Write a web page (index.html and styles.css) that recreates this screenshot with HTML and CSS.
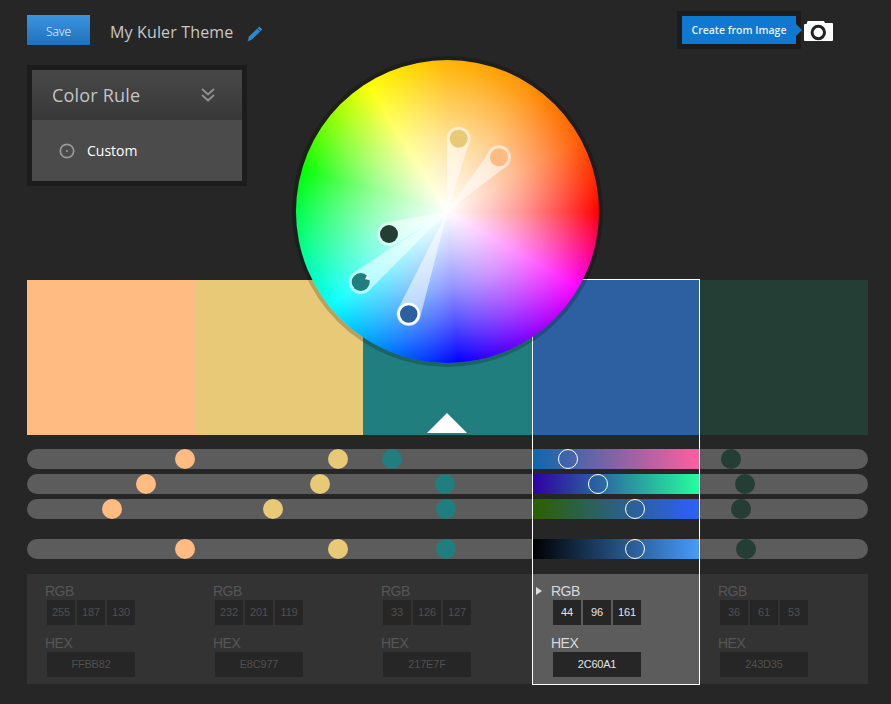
FILE: index.html
```html
<!DOCTYPE html>
<html lang="en">
<head>
<meta charset="utf-8">
<title>My Kuler Theme</title>
<link rel="stylesheet" href="styles.css">
</head>
<body>
<div class="page">
  <section class="top">
    <header class="toolbar">
      <button class="save">Save</button>
      <h1 class="title">My Kuler Theme</h1>
      <svg class="pencil" width="16" height="16" viewBox="0 0 16 16"><path d="M12.2 0.6 L15.4 3.4 L5 13.4 L0.6 15.4 L2 10.6 Z" fill="#2f86c8"/><path d="M10.4 2.6 L13.4 5.4" stroke="#262626" stroke-width=".8"/></svg>
      <div class="create">
        <div class="create-frame"><a class="create-btn">Create from Image</a></div>
        <svg class="camera" width="29" height="21" viewBox="0 0 29 21"><path d="M1 3 H2.6 L3.6 0 H20 L21 2 H28 Q29 2 29 3 V19 Q29 20 28 20 H1 Q0 20 0 19 V4 Q0 3 1 3 Z" fill="#fff"/><circle cx="14.3" cy="11.5" r="6.2" fill="none" stroke="#222" stroke-width="3"/></svg>
      </div>
    </header>
    <aside class="rule">
      <div class="rule-head">
        <span>Color Rule</span>
        <svg width="14" height="14" viewBox="0 0 14 14"><path d="M1 1 L7 6.5 L13 1 M1 7 L7 12.5 L13 7" fill="none" stroke="#8f8f8f" stroke-width="2"/></svg>
      </div>
      <div class="rule-body">
        <svg width="16" height="16" viewBox="0 0 16 16"><circle cx="8" cy="8" r="6.7" fill="none" stroke="#9a9a9a" stroke-width="1.7"/><circle cx="8" cy="8" r="1" fill="#9a9a9a"/></svg>
        <span>Custom</span>
      </div>
    </aside>
  </section>

  <section class="swatches">
    <div class="swatch c1"></div>
    <div class="swatch c2"></div>
    <div class="swatch c3"><span class="marker"></span></div>
    <div class="swatch c4"></div>
    <div class="swatch c5"></div>
  </section>

  <section class="sliders">
    <div class="track">
      <span class="grad g1"></span>
      <i class="dot c1" style="left:148px"></i><i class="dot c2" style="left:301px"></i><i class="dot c3" style="left:355px"></i><i class="dot ring" style="left:531px"></i><i class="dot c5" style="left:694px"></i>
    </div>
    <div class="track">
      <span class="grad g2"></span>
      <i class="dot c1" style="left:109px"></i><i class="dot c2" style="left:283px"></i><i class="dot c3" style="left:408px"></i><i class="dot ring" style="left:561px"></i><i class="dot c5" style="left:708px"></i>
    </div>
    <div class="track">
      <span class="grad g3"></span>
      <i class="dot c1" style="left:75px"></i><i class="dot c2" style="left:236px"></i><i class="dot c3" style="left:409px"></i><i class="dot ring" style="left:598px"></i><i class="dot c5" style="left:704px"></i>
    </div>
    <div class="track track-gap">
      <span class="grad g4"></span>
      <i class="dot c1" style="left:148px"></i><i class="dot c2" style="left:301px"></i><i class="dot c3" style="left:409px"></i><i class="dot ring" style="left:598px"></i><i class="dot c5" style="left:709px"></i>
    </div>
  </section>

  <section class="values">
    <div class="col">
      <div class="label">RGB</div>
      <div class="boxes"><span>255</span><span>187</span><span>130</span></div>
      <div class="label hex">HEX</div>
      <div class="box-wide">FFBB82</div>
    </div>
    <div class="col">
      <div class="label">RGB</div>
      <div class="boxes"><span>232</span><span>201</span><span>119</span></div>
      <div class="label hex">HEX</div>
      <div class="box-wide">E8C977</div>
    </div>
    <div class="col">
      <div class="label">RGB</div>
      <div class="boxes"><span>33</span><span>126</span><span>127</span></div>
      <div class="label hex">HEX</div>
      <div class="box-wide">217E7F</div>
    </div>
    <div class="col active">
      <div class="label">RGB</div>
      <div class="boxes"><span>44</span><span>96</span><span>161</span></div>
      <div class="label hex">HEX</div>
      <div class="box-wide">2C60A1</div>
    </div>
    <div class="col">
      <div class="label">RGB</div>
      <div class="boxes"><span>36</span><span>61</span><span>53</span></div>
      <div class="label hex">HEX</div>
      <div class="box-wide">243D35</div>
    </div>
  </section>

  <div class="selection"></div>

  <div class="wheel">
    <div class="wheel-light"></div>
    <svg class="handles" width="303" height="303" viewBox="0 0 303 303">
      <g class="spoke">
        <path d="M151.5 151.5 L150.7 78.6 L173.4 81.9 Z"/><circle cx="162.7" cy="78.7" r="12"/>
      </g>
      <g class="spoke">
        <path d="M151.5 151.5 L195.1 88.9 L211 105.6 Z"/><circle cx="203" cy="97.3" r="12"/>
      </g>
      <g class="spoke">
        <path d="M151.5 151.5 L89.5 162.8 L97.7 185 Z"/><circle cx="93" cy="174" r="12"/>
      </g>
      <g class="spoke">
        <path d="M151.5 151.5 L57.3 212.7 L72.2 231.4 Z"/><circle cx="64.7" cy="222" r="12"/>
      </g>
      <g class="spoke">
        <path d="M151.5 151.5 L101.5 250 L123.9 258.2 Z"/><circle cx="112.7" cy="254" r="12"/>
      </g>
      <circle cx="162.7" cy="78.7" r="9" fill="#E8C977"/>
      <circle cx="203" cy="97.3" r="9" fill="#FFBB82"/>
      <circle cx="93" cy="174" r="9" fill="#243D35"/>
      <circle cx="64.7" cy="222" r="9" fill="#217E7F"/>
      <path d="M69 219.3 L71 215.3 L74 220 Z" fill="#fff"/>
      <circle cx="112.7" cy="254" r="10" fill="#2C60A1" stroke="#fff" stroke-width="2.5"/>
    </svg>
  </div>
</div>
</body>
</html>
```

FILE: styles.css
```css
* { box-sizing: border-box; }
html, body { margin: 0; height: 100%; }
body { background: #262626; overflow: hidden; font-family: "Open Sans", sans-serif; }
.page { position: relative; width: 891px; height: 704px; padding: 0 23px 0 27px; }

.top { height: 280px; padding-top: 15px; }
.toolbar { display: flex; align-items: center; height: 30px; }
.save {
  width: 63px; height: 30px; padding: 2px 0 0; border: 0;
  background: linear-gradient(#3b95e0, #1f70bc);
  color: #fff; font: 300 12px "Open Sans", sans-serif;
}
.title { margin: 0 14px 0 20px; padding-top: 4px; font-size: 16px; font-weight: 400; letter-spacing: .15px; color: #c8c8c8; width: 123px; white-space: nowrap; }
.pencil { margin-top: 7px; }
.create { display: flex; align-items: center; margin-left: auto; margin-right: 35px; }
.create-frame { position: relative; padding: 5px; background: #1c1c1c; }
.create-btn {
  position: relative; display: block; width: 114px; height: 28px; line-height: 28px; text-align: center;
  background: #0f78cf; color: #e4f1fb; font-size: 10.5px; font-weight: 600; white-space: nowrap;
}
.create-btn::after {
  content: ""; position: absolute; left: 100%; top: 8px;
  border: 6px solid transparent; border-left-color: #0f78cf; border-right-width: 0;
}
.camera { margin-left: 3px; margin-top: 2px; }

.rule { width: 220px; margin-top: 20px; border: 5px solid #1c1c1c; }
.rule-head {
  display: flex; align-items: center; justify-content: space-between;
  height: 50px; padding: 0 27px 0 20px;
  background: linear-gradient(#484848, #383838); color: #c4c4c4; font-size: 18px; letter-spacing: .2px;
}
.rule-body {
  display: flex; align-items: center; gap: 12px; height: 61px; padding-left: 27px;
  background: #4b4b4b; color: #fff; font-size: 14px; font-weight: 500;
}

.swatches, .values { display: grid; grid-template-columns: 168px 168px 170px 167px 168px; }
.swatch { height: 155px; position: relative; }
.c1 { background: #FFBB82; }
.c2 { background: #E8C977; }
.c3 { background: #217E7F; }
.c4 { background: #2C60A1; }
.c5 { background: #243D35; }
.marker {
  position: absolute; left: 64px; bottom: 2px;
  border: 20px solid transparent; border-top: 0; border-bottom: 20px solid #fff;
  border-left-width: 20.5px; border-right-width: 20.5px;
}

.sliders { display: flex; flex-direction: column; gap: 5px; padding-top: 14px; }
.track { position: relative; height: 20px; border-radius: 10px; background: #5c5c5c; }
.track-gap { margin-top: 15px; }
.grad { position: absolute; left: 506px; width: 167px; top: 0; bottom: 0; }
.g1 { background: linear-gradient(90deg, #0f67ab, #ff5f9f); }
.g2 { background: linear-gradient(90deg, #2f00a1, #26ff9f); }
.g3 { background: linear-gradient(90deg, #2c6000, #2c60ff); }
.g4 { background: linear-gradient(90deg, #000, #479cff); }
.dot { position: absolute; top: 0; width: 20px; height: 20px; border-radius: 50%; }
.ring { border: 1.5px solid #fff; }

.values { margin-top: 15px; height: 110px; background: #333; }
.col { position: relative; padding: 9px 0 0 18px; color: #565656; }
.label { font: 14px/16px "Liberation Sans", sans-serif; letter-spacing: -.5px; height: 17px; }
.hex { margin-top: 10px; }
.boxes { display: flex; gap: 2px; margin-left: 2px; }
.boxes span, .box-wide {
  height: 25px; text-align: center; background: #262626;
  font: 11px/25px "Liberation Sans", sans-serif; letter-spacing: -.2px; color: #505050;
}
.boxes span { width: 28px; }
.box-wide { width: 88px; margin-left: 2px; }
.active { background: #5c5c5c; color: #d8d8d8; }
.active .boxes span, .active .box-wide { color: #e4e4e4; }
.active::before {
  content: ""; position: absolute; left: 3px; top: 13px;
  border: 4px solid transparent; border-left: 6px solid #ddd; border-right: 0;
}

.selection {
  position: absolute; left: 532px; top: 279px; width: 168px; height: 406px;
  border: 1px solid #fff; pointer-events: none;
}

.wheel {
  position: absolute; left: 296px; top: 60px; width: 303px; height: 303px; border-radius: 50%;
  box-shadow: 0 0 0 4px rgba(0, 0, 0, .2);
  background: conic-gradient(#ffb400 0deg, #ff9400 30deg, #ff5a00 62deg, #ff0000 90deg, #ff00ff 120deg, #0000ff 176deg, #00ffff 231deg, #00ff00 286deg, #ffff00 328deg, #ffb400 360deg);
}
.wheel-light {
  position: absolute; inset: 0; border-radius: 50%;
  background: radial-gradient(closest-side, #fff 0, rgba(255, 255, 255, .8) 25%, rgba(255, 255, 255, .58) 50%, rgba(255, 255, 255, .3) 75%, rgba(255, 255, 255, 0) 100%);
}
.handles { position: absolute; inset: 0; }
.spoke { fill: #fff; opacity: .55; }
```
